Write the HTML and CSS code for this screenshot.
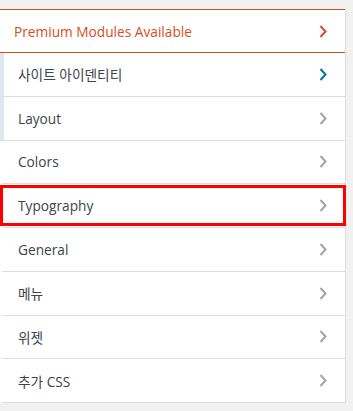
FILE: index.html
```html
<!DOCTYPE html>
<html lang="ko">
<head>
    <meta charset="UTF-8">
    <meta name="viewport" content="width=device-width, initial-scale=1.0">
    <title>Customizer</title>
    <link rel="stylesheet" href="styles.css">
</head>
<body>
    <ul class="sections">
        <li class="section premium">
            <span>Premium Modules Available</span>
            <svg class="chevron" viewBox="0 0 8 13"><polyline points="1.5,1 6.5,6.5 1.5,12"/></svg>
        </li>
        <li class="section active">
            <span>사이트 아이덴티티</span>
            <svg class="chevron" viewBox="0 0 8 13"><polyline points="1.5,1 6.5,6.5 1.5,12"/></svg>
        </li>
        <li class="section hovered">
            <span>Layout</span>
            <svg class="chevron" viewBox="0 0 8 13"><polyline points="1.5,1 6.5,6.5 1.5,12"/></svg>
        </li>
        <li class="section">
            <span>Colors</span>
            <svg class="chevron" viewBox="0 0 8 13"><polyline points="1.5,1 6.5,6.5 1.5,12"/></svg>
        </li>
        <li class="section marked">
            <span>Typography</span>
            <svg class="chevron" viewBox="0 0 8 13"><polyline points="1.5,1 6.5,6.5 1.5,12"/></svg>
        </li>
        <li class="section">
            <span>General</span>
            <svg class="chevron" viewBox="0 0 8 13"><polyline points="1.5,1 6.5,6.5 1.5,12"/></svg>
        </li>
        <li class="section">
            <span>메뉴</span>
            <svg class="chevron" viewBox="0 0 8 13"><polyline points="1.5,1 6.5,6.5 1.5,12"/></svg>
        </li>
        <li class="section">
            <span>위젯</span>
            <svg class="chevron" viewBox="0 0 8 13"><polyline points="1.5,1 6.5,6.5 1.5,12"/></svg>
        </li>
        <li class="section">
            <span>추가 CSS</span>
            <svg class="chevron" viewBox="0 0 8 13"><polyline points="1.5,1 6.5,6.5 1.5,12"/></svg>
        </li>
    </ul>
</body>
</html>
```

FILE: styles.css
```css
body {
    margin: 0;
    background-color: #f1f1f1;
    font-family: 'Open Sans', 'Noto Sans CJK KR', sans-serif;
    font-size: 13.7px;
    color: #3c434a;
}

.sections {
    list-style: none;
    margin: 9px 0 0 0;
    padding: 0;
    width: 345px;
    background-color: white;
    border-right: 1px solid #ddd;
}

.section {
    position: relative;
    display: flex;
    align-items: center;
    justify-content: space-between;
    box-sizing: border-box;
    height: 43.75px;
    padding: 0 18px 0 14px;
    border-left: 4px solid transparent;
    border-bottom: 1px solid #ddd;
}

.chevron {
    width: 8px;
    height: 13px;
    fill: none;
    stroke: #a0a5aa;
    stroke-width: 2;
}

.premium {
    height: 44px;
    padding-left: 14px;
    border-left: none;
    border-top: 1px solid #d54e21;
    border-bottom: 1px solid #d54e21;
    color: #d54e21;
}

.premium .chevron {
    stroke: #d54e21;
}

.active, .hovered {
    border-left-color: #dfe8f0;
}

.active .chevron {
    stroke: #0073aa;
}

.marked::after {
    content: '';
    position: absolute;
    top: 1px;
    bottom: 1px;
    left: -4px;
    right: -1px;
    border: 3px solid #f00;
}
```
